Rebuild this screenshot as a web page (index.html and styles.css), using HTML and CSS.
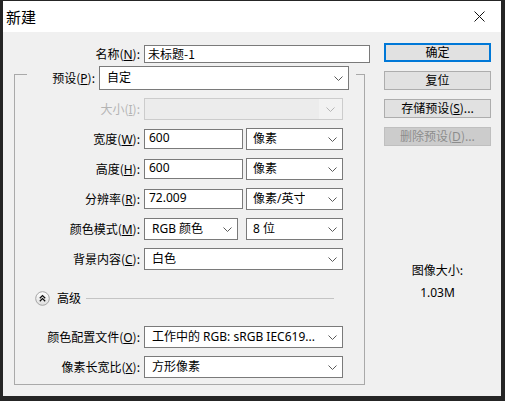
FILE: index.html
```html
<!DOCTYPE html>
<html lang="zh-CN">
<head>
<meta charset="utf-8">
<title>新建</title>
<link rel="stylesheet" href="styles.css">
</head>
<body>
<div class="window">
  <div class="titlebar">
    <span class="title">新建</span>
    <svg class="close" width="11" height="11" viewBox="0 0 11 11"><path d="M0.5 0.5 L10.5 10.5 M10.5 0.5 L0.5 10.5" stroke="#111" stroke-width="1" fill="none"/></svg>
  </div>
  <div class="content">
    <div class="form">
      <div class="name-row">
        <label class="lbl name-lbl">名称(<u>N</u>):</label>
        <div class="input name-input">未标题-1</div>
      </div>
      <div class="group">
        <div class="preset-row">
          <label class="lbl preset-lbl">预设(<u>P</u>):</label>
          <div class="select preset-select"><span>自定</span><svg class="chev" width="9" height="5" viewBox="0 0 9 5"><polyline points="0.5,0.5 4.5,4.5 8.5,0.5" fill="none" stroke="#5a5a5a"/></svg></div>
        </div>
        <div class="row">
          <label class="lbl disabled">大小(<u>I</u>):</label>
          <div class="select wide disabled-select"><span class="dis-main"></span><span class="dis-arrow"><svg class="chev" width="9" height="5" viewBox="0 0 9 5"><polyline points="0.5,0.5 4.5,4.5 8.5,0.5" fill="none" stroke="#b5b5b5"/></svg></span></div>
        </div>
        <div class="row">
          <label class="lbl">宽度(<u>W</u>):</label>
          <div class="input num">600</div>
          <div class="select unit"><span>像素</span><svg class="chev" width="9" height="5" viewBox="0 0 9 5"><polyline points="0.5,0.5 4.5,4.5 8.5,0.5" fill="none" stroke="#5a5a5a"/></svg></div>
        </div>
        <div class="row">
          <label class="lbl">高度(<u>H</u>):</label>
          <div class="input num">600</div>
          <div class="select unit"><span>像素</span><svg class="chev" width="9" height="5" viewBox="0 0 9 5"><polyline points="0.5,0.5 4.5,4.5 8.5,0.5" fill="none" stroke="#5a5a5a"/></svg></div>
        </div>
        <div class="row">
          <label class="lbl">分辨率(<u>R</u>):</label>
          <div class="input num">72.009</div>
          <div class="select unit"><span>像素/英寸</span><svg class="chev" width="9" height="5" viewBox="0 0 9 5"><polyline points="0.5,0.5 4.5,4.5 8.5,0.5" fill="none" stroke="#5a5a5a"/></svg></div>
        </div>
        <div class="row">
          <label class="lbl">颜色模式(<u>M</u>):</label>
          <div class="select mode"><span>RGB 颜色</span><svg class="chev" width="9" height="5" viewBox="0 0 9 5"><polyline points="0.5,0.5 4.5,4.5 8.5,0.5" fill="none" stroke="#5a5a5a"/></svg></div>
          <div class="select unit"><span>8 位</span><svg class="chev" width="9" height="5" viewBox="0 0 9 5"><polyline points="0.5,0.5 4.5,4.5 8.5,0.5" fill="none" stroke="#5a5a5a"/></svg></div>
        </div>
        <div class="row">
          <label class="lbl">背景内容(<u>C</u>):</label>
          <div class="select wide"><span>白色</span><svg class="chev" width="9" height="5" viewBox="0 0 9 5"><polyline points="0.5,0.5 4.5,4.5 8.5,0.5" fill="none" stroke="#5a5a5a"/></svg></div>
        </div>
        <div class="adv-row">
          <svg class="adv-icon" width="15" height="15" viewBox="0 0 15 15">
            <defs><linearGradient id="g" x1="0" y1="0" x2="0" y2="1"><stop offset="0" stop-color="#ffffff"/><stop offset="1" stop-color="#dedede"/></linearGradient></defs>
            <circle cx="7.5" cy="7.5" r="6.8" fill="url(#g)" stroke="#a4a4a4" stroke-width="1"/>
            <polyline points="4.8,7.2 7.5,4.6 10.2,7.2" fill="none" stroke="#111" stroke-width="1.3"/>
            <polyline points="4.8,10.2 7.5,7.6 10.2,10.2" fill="none" stroke="#111" stroke-width="1.3"/>
          </svg>
          <span class="adv-text">高级</span>
          <span class="adv-line"></span>
        </div>
        <div class="row">
          <label class="lbl">颜色配置文件(<u>O</u>):</label>
          <div class="select wide"><span>工作中的 RGB: sRGB IEC619...</span><svg class="chev" width="9" height="5" viewBox="0 0 9 5"><polyline points="0.5,0.5 4.5,4.5 8.5,0.5" fill="none" stroke="#5a5a5a"/></svg></div>
        </div>
        <div class="row">
          <label class="lbl">像素长宽比(<u>X</u>):</label>
          <div class="select wide"><span>方形像素</span><svg class="chev" width="9" height="5" viewBox="0 0 9 5"><polyline points="0.5,0.5 4.5,4.5 8.5,0.5" fill="none" stroke="#5a5a5a"/></svg></div>
        </div>
      </div>
    </div>
    <div class="side">
      <div class="btn default">确定</div>
      <div class="btn">复位</div>
      <div class="btn">存储预设(<u>S</u>)...</div>
      <div class="btn btn-disabled">删除预设(<u>D</u>)...</div>
      <div class="size-label">图像大小:</div>
      <div class="size-value">1.03M</div>
    </div>
  </div>
</div>
</body>
</html>
```
FILE: styles.css
```css
* { box-sizing: border-box; }
html, body { margin: 0; padding: 0; }
body {
  width: 505px;
  height: 401px;
  background: #252525;
  overflow: hidden;
  font-family: "Noto Sans", "Noto Sans CJK SC", sans-serif;
  font-size: 12px;
  color: #000;
}
.window {
  margin: 1px 0 0 3px;
  width: 498px;
  height: 395px;
  background: #f0f0f0;
  display: flex;
  flex-direction: column;
}
.titlebar {
  height: 31px;
  background: #fff;
  display: flex;
  align-items: center;
  justify-content: space-between;
  padding: 0 16px 0 3px;
}
.title {
  font-family: "Noto Sans CJK SC", sans-serif;
  font-size: 15px;
  line-height: 20px;
}
.close { display: block; }
.content {
  display: flex;
  flex: 1;
}
.form {
  width: 367px;
  padding-top: 13px;
}
.lbl {
  text-align: right;
  white-space: nowrap;
  line-height: 16px;
  font-family: "Noto Sans CJK SC", sans-serif;
}
.lbl u { font-family: "Noto Sans", sans-serif; }
.lbl.disabled { color: #b4b4b4; }
.name-row {
  display: flex;
  align-items: center;
  gap: 4px;
  height: 18px;
}
.name-lbl { width: 137px; }
.input {
  background: #fff;
  border: 1px solid #7a7a7a;
  line-height: 16px;
  white-space: nowrap;
  overflow: hidden;
}
.name-input {
  width: 226px;
  height: 18px;
  padding-left: 3px;
  font-family: "Noto Sans CJK SC", sans-serif;
  line-height: 16px;
}
.group {
  margin: 11px 0 0 11px;
  width: 351px;
  border: 1px solid #a9a9a9;
  padding-bottom: 2px;
}
.preset-row {
  margin: -9px 8px 0 12px;
  background: #f0f0f0;
  display: flex;
  align-items: center;
  gap: 4px;
  padding-right: 6px;
  height: 24px;
}
.preset-lbl { width: 68px; }
.select {
  display: flex;
  align-items: center;
  justify-content: space-between;
  background: #fff;
  border: 1px solid #7a7a7a;
  height: 22px;
  padding: 0 5px 0 7px;
  line-height: 16px;
  white-space: nowrap;
  font-family: "Noto Sans", "Noto Sans CJK SC", sans-serif;
}
.select span { overflow: hidden; }
.chev { display: block; flex: none; }
.preset-select { width: 250px; height: 24px; }
.row {
  display: flex;
  align-items: center;
  height: 30px;
}
.preset-row + .row { margin-top: 4px; }
.row .lbl { width: 125px; margin-right: 4px; }
.wide { width: 199px; }
.num {
  width: 99px;
  height: 20px;
  padding-left: 4px;
  margin-right: 3px;
}
.unit { width: 97px; padding-left: 6px; }
.mode { width: 94px; margin-right: 8px; }
.disabled-select {
  background: #e9e9e9;
  border-color: #cccccc;
  padding: 0;
}
.dis-main {
  flex: 1;
  align-self: stretch;
  background: #ececec;
}
.dis-arrow {
  width: 23px;
  align-self: stretch;
  display: flex;
  align-items: center;
  justify-content: center;
  background: #f2f2f2;
}
.adv-row {
  display: flex;
  align-items: center;
  height: 28px;
  margin-top: 10px;
  padding-left: 20px;
  margin-right: 30px;
}
.adv-icon { display: block; flex: none; }
.adv-text {
  margin-left: 7px;
  font-family: "Noto Sans CJK SC", sans-serif;
  line-height: 16px;
}
.adv-line {
  flex: 1;
  height: 1px;
  background: #c4c4c4;
  margin-left: 5px;
}
.adv-row + .row { margin-top: 10px; }
.side {
  margin-left: 14px;
  width: 107px;
  padding-top: 11px;
  display: flex;
  flex-direction: column;
  align-items: stretch;
}
.btn {
  height: 19px;
  margin-bottom: 9px;
  background: #e1e1e1;
  border: 1px solid #adadad;
  text-align: center;
  line-height: 16px;
  font-family: "Noto Sans CJK SC", sans-serif;
}
.btn u { font-family: "Noto Sans", sans-serif; }
.btn.default {
  border: 2px solid #0078d7;
  line-height: 14px;
}
.btn-disabled {
  background: #cccccc;
  border-color: #bfbfbf;
  color: #8c8c8c;
}
.size-label {
  margin-top: 107px;
  text-align: center;
  line-height: 16px;
  font-family: "Noto Sans CJK SC", sans-serif;
}
.size-value {
  margin-top: 7px;
  text-align: center;
  line-height: 16px;
}
```
